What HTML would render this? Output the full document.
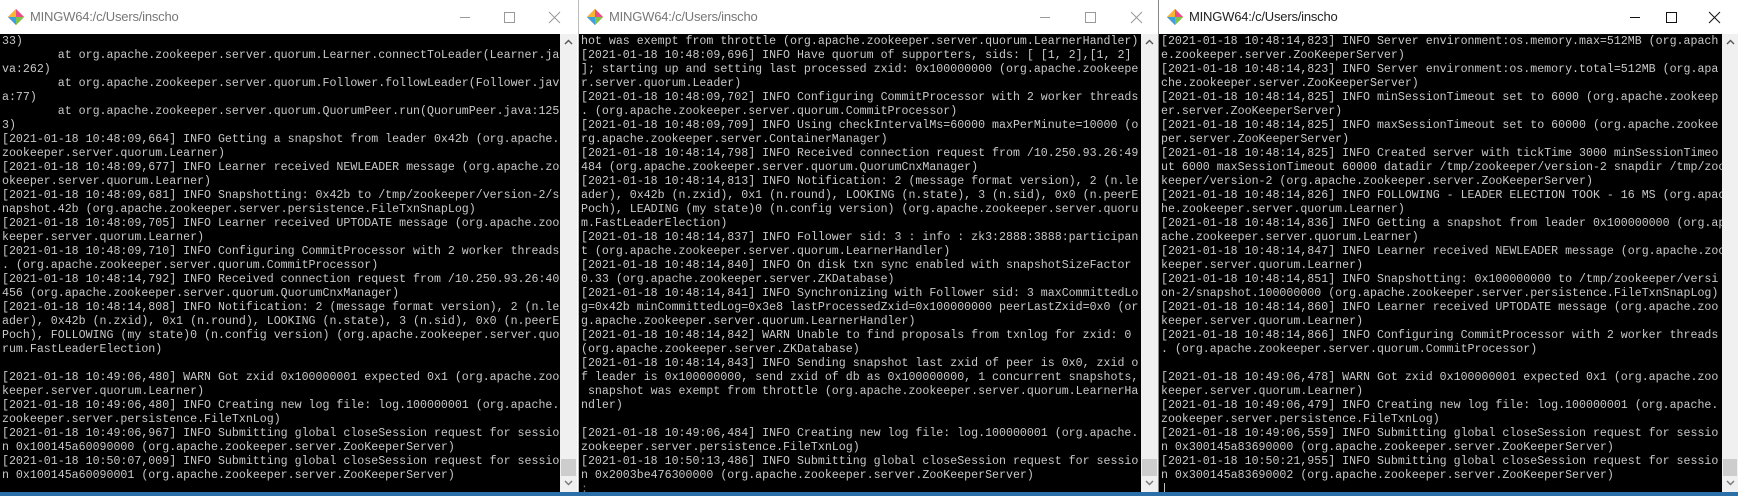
<!DOCTYPE html>
<html><head><meta charset="utf-8"><style>
*{margin:0;padding:0;box-sizing:border-box}
body{width:1738px;height:496px;overflow:hidden;background:#fff;position:relative;font-family:"Liberation Sans",sans-serif}
.win{position:absolute;top:0;height:492px;background:#fff;overflow:hidden}
.title{position:absolute;left:0;top:0;right:0;height:34px;background:#fff}
.title .t{position:absolute;left:30px;top:9px;font-size:13px;color:#222;letter-spacing:-0.2px}
.title.in .t{color:#777}
.icon{position:absolute;left:8px;top:9px}
.btn{position:absolute;top:0;height:34px;width:46px;color:#111}
.in .btn{color:#999}
.term{position:absolute;left:0;top:34px;bottom:0;background:#000;overflow:hidden}
pre{font-family:"Liberation Mono",monospace;font-size:11.62px;line-height:14px;color:#c8c8c8;white-space:pre;padding-left:2px;padding-top:1px}
.sb{position:absolute;top:34px;bottom:0;width:17px;background:#f0f0f0}
.thumb{position:absolute;left:1px;right:1px;top:425px;height:17px;background:#cdcdcd}
.ua,.da{position:absolute;left:4px;width:9px;height:6px}
.ua{top:5px}.da{bottom:6px}
.blue{position:absolute;left:0;right:0;bottom:0;height:4px;background:#2b6fa8}
</style></head><body>

<svg width="0" height="0" style="position:absolute">
<defs><g id="gi"><path d="M8 0 L16 8 L8 16 L0 8 Z" fill="#f1502f"/><path d="M8 0 L16 8 L8 8 Z" fill="#e94e8a"/><path d="M0 8 L8 8 L8 16 Z" fill="#3ba0e0"/><path d="M8 8 L16 8 L8 16 Z" fill="#7cc44a"/><path d="M0 8 L8 0 L8 8 Z" fill="#f7b733"/></g></defs></svg>

<!-- Window 1 -->
<div class="win" style="left:0;width:577px">
 <div class="title in"><svg class="icon" width="16" height="16"><use href="#gi"/></svg><span class="t">MINGW64:/c/Users/inscho</span>
  <svg class="btn" style="left:442px" viewBox="0 0 46 34"><path d="M18 17.5h10" stroke="currentColor"/></svg>
  <svg class="btn" style="left:486px" viewBox="0 0 46 34"><rect x="18.5" y="12.5" width="10" height="10" fill="none" stroke="currentColor"/></svg>
  <svg class="btn" style="left:531px" viewBox="0 0 46 34"><path d="M18 12l11 11M29 12l-11 11" stroke="currentColor"/></svg>
 </div>
 <div class="term" style="right:17px"><pre>33)
        at org.apache.zookeeper.server.quorum.Learner.connectToLeader(Learner.ja
va:262)
        at org.apache.zookeeper.server.quorum.Follower.followLeader(Follower.jav
a:77)
        at org.apache.zookeeper.server.quorum.QuorumPeer.run(QuorumPeer.java:125
3)
[2021-01-18 10:48:09,664] INFO Getting a snapshot from leader 0x42b (org.apache.
zookeeper.server.quorum.Learner)
[2021-01-18 10:48:09,677] INFO Learner received NEWLEADER message (org.apache.zo
okeeper.server.quorum.Learner)
[2021-01-18 10:48:09,681] INFO Snapshotting: 0x42b to /tmp/zookeeper/version-2/s
napshot.42b (org.apache.zookeeper.server.persistence.FileTxnSnapLog)
[2021-01-18 10:48:09,705] INFO Learner received UPTODATE message (org.apache.zoo
keeper.server.quorum.Learner)
[2021-01-18 10:48:09,710] INFO Configuring CommitProcessor with 2 worker threads
. (org.apache.zookeeper.server.quorum.CommitProcessor)
[2021-01-18 10:48:14,792] INFO Received connection request from /10.250.93.26:40
456 (org.apache.zookeeper.server.quorum.QuorumCnxManager)
[2021-01-18 10:48:14,808] INFO Notification: 2 (message format version), 2 (n.le
ader), 0x42b (n.zxid), 0x1 (n.round), LOOKING (n.state), 3 (n.sid), 0x0 (n.peerE
Poch), FOLLOWING (my state)0 (n.config version) (org.apache.zookeeper.server.quo
rum.FastLeaderElection)

[2021-01-18 10:49:06,480] WARN Got zxid 0x100000001 expected 0x1 (org.apache.zoo
keeper.server.quorum.Learner)
[2021-01-18 10:49:06,480] INFO Creating new log file: log.100000001 (org.apache.
zookeeper.server.persistence.FileTxnLog)
[2021-01-18 10:49:06,967] INFO Submitting global closeSession request for sessio
n 0x100145a60090000 (org.apache.zookeeper.server.ZooKeeperServer)
[2021-01-18 10:50:07,009] INFO Submitting global closeSession request for sessio
n 0x100145a60090001 (org.apache.zookeeper.server.ZooKeeperServer)</pre></div>
 <div class="sb" style="right:0"><svg class="ua" viewBox="0 0 9 6"><path d="M1 5l3.5-3.5L8 5" stroke="#555" fill="none" stroke-width="1.4"/></svg><div class="thumb"></div><svg class="da" viewBox="0 0 9 6"><path d="M1 1l3.5 3.5L8 1" stroke="#777" fill="none" stroke-width="1.4"/></svg></div>
</div>

<!-- Window 2 -->
<div class="win" style="left:578px;width:580px;border-left:1px solid #bbb">
 <div class="title in"><svg class="icon" width="16" height="16"><use href="#gi"/></svg><span class="t">MINGW64:/c/Users/inscho</span>
  <svg class="btn" style="left:443px" viewBox="0 0 46 34"><path d="M18 17.5h10" stroke="currentColor"/></svg>
  <svg class="btn" style="left:488px" viewBox="0 0 46 34"><rect x="18.5" y="12.5" width="10" height="10" fill="none" stroke="currentColor"/></svg>
  <svg class="btn" style="left:534px" viewBox="0 0 46 34"><path d="M18 12l11 11M29 12l-11 11" stroke="currentColor"/></svg>
 </div>
 <div class="term" style="right:17px"><pre>hot was exempt from throttle (org.apache.zookeeper.server.quorum.LearnerHandler)
[2021-01-18 10:48:09,696] INFO Have quorum of supporters, sids: [ [1, 2],[1, 2]
]; starting up and setting last processed zxid: 0x100000000 (org.apache.zookeepe
r.server.quorum.Leader)
[2021-01-18 10:48:09,702] INFO Configuring CommitProcessor with 2 worker threads
. (org.apache.zookeeper.server.quorum.CommitProcessor)
[2021-01-18 10:48:09,709] INFO Using checkIntervalMs=60000 maxPerMinute=10000 (o
rg.apache.zookeeper.server.ContainerManager)
[2021-01-18 10:48:14,798] INFO Received connection request from /10.250.93.26:49
484 (org.apache.zookeeper.server.quorum.QuorumCnxManager)
[2021-01-18 10:48:14,813] INFO Notification: 2 (message format version), 2 (n.le
ader), 0x42b (n.zxid), 0x1 (n.round), LOOKING (n.state), 3 (n.sid), 0x0 (n.peerE
Poch), LEADING (my state)0 (n.config version) (org.apache.zookeeper.server.quoru
m.FastLeaderElection)
[2021-01-18 10:48:14,837] INFO Follower sid: 3 : info : zk3:2888:3888:participan
t (org.apache.zookeeper.server.quorum.LearnerHandler)
[2021-01-18 10:48:14,840] INFO On disk txn sync enabled with snapshotSizeFactor
0.33 (org.apache.zookeeper.server.ZKDatabase)
[2021-01-18 10:48:14,841] INFO Synchronizing with Follower sid: 3 maxCommittedLo
g=0x42b minCommittedLog=0x3e8 lastProcessedZxid=0x100000000 peerLastZxid=0x0 (or
g.apache.zookeeper.server.quorum.LearnerHandler)
[2021-01-18 10:48:14,842] WARN Unable to find proposals from txnlog for zxid: 0
(org.apache.zookeeper.server.ZKDatabase)
[2021-01-18 10:48:14,843] INFO Sending snapshot last zxid of peer is 0x0, zxid o
f leader is 0x100000000, send zxid of db as 0x100000000, 1 concurrent snapshots,
 snapshot was exempt from throttle (org.apache.zookeeper.server.quorum.LearnerHa
ndler)

[2021-01-18 10:49:06,484] INFO Creating new log file: log.100000001 (org.apache.
zookeeper.server.persistence.FileTxnLog)
[2021-01-18 10:50:13,486] INFO Submitting global closeSession request for sessio
n 0x2003be476300000 (org.apache.zookeeper.server.ZooKeeperServer)
<span style="color:#777">:</span></pre></div>
 <div class="sb" style="right:0"><svg class="ua" viewBox="0 0 9 6"><path d="M1 5l3.5-3.5L8 5" stroke="#555" fill="none" stroke-width="1.4"/></svg><div class="thumb"></div><svg class="da" viewBox="0 0 9 6"><path d="M1 1l3.5 3.5L8 1" stroke="#777" fill="none" stroke-width="1.4"/></svg></div>
</div>

<!-- Window 3 -->
<div class="win" style="left:1158px;width:580px;border-left:1px solid #888">
 <div class="title"><svg class="icon" width="16" height="16"><use href="#gi"/></svg><span class="t">MINGW64:/c/Users/inscho</span>
  <svg class="btn" style="left:453px" viewBox="0 0 46 34"><path d="M18 17.5h10" stroke="currentColor"/></svg>
  <svg class="btn" style="left:489px" viewBox="0 0 46 34"><rect x="18.5" y="12.5" width="10" height="10" fill="none" stroke="currentColor"/></svg>
  <svg class="btn" style="left:532px" viewBox="0 0 46 34"><path d="M18 12l11 11M29 12l-11 11" stroke="currentColor"/></svg>
 </div>
 <div class="term" style="right:16px"><pre>[2021-01-18 10:48:14,823] INFO Server environment:os.memory.max=512MB (org.apach
e.zookeeper.server.ZooKeeperServer)
[2021-01-18 10:48:14,823] INFO Server environment:os.memory.total=512MB (org.apa
che.zookeeper.server.ZooKeeperServer)
[2021-01-18 10:48:14,825] INFO minSessionTimeout set to 6000 (org.apache.zookeep
er.server.ZooKeeperServer)
[2021-01-18 10:48:14,825] INFO maxSessionTimeout set to 60000 (org.apache.zookee
per.server.ZooKeeperServer)
[2021-01-18 10:48:14,825] INFO Created server with tickTime 3000 minSessionTimeo
ut 6000 maxSessionTimeout 60000 datadir /tmp/zookeeper/version-2 snapdir /tmp/zoo
keeper/version-2 (org.apache.zookeeper.server.ZooKeeperServer)
[2021-01-18 10:48:14,826] INFO FOLLOWING - LEADER ELECTION TOOK - 16 MS (org.apac
he.zookeeper.server.quorum.Learner)
[2021-01-18 10:48:14,836] INFO Getting a snapshot from leader 0x100000000 (org.ap
ache.zookeeper.server.quorum.Learner)
[2021-01-18 10:48:14,847] INFO Learner received NEWLEADER message (org.apache.zoo
keeper.server.quorum.Learner)
[2021-01-18 10:48:14,851] INFO Snapshotting: 0x100000000 to /tmp/zookeeper/versi
on-2/snapshot.100000000 (org.apache.zookeeper.server.persistence.FileTxnSnapLog)
[2021-01-18 10:48:14,860] INFO Learner received UPTODATE message (org.apache.zoo
keeper.server.quorum.Learner)
[2021-01-18 10:48:14,866] INFO Configuring CommitProcessor with 2 worker threads
. (org.apache.zookeeper.server.quorum.CommitProcessor)

[2021-01-18 10:49:06,478] WARN Got zxid 0x100000001 expected 0x1 (org.apache.zoo
keeper.server.quorum.Learner)
[2021-01-18 10:49:06,479] INFO Creating new log file: log.100000001 (org.apache.
zookeeper.server.persistence.FileTxnLog)
[2021-01-18 10:49:06,559] INFO Submitting global closeSession request for sessio
n 0x300145a83690000 (org.apache.zookeeper.server.ZooKeeperServer)
[2021-01-18 10:50:21,955] INFO Submitting global closeSession request for sessio
n 0x300145a83690002 (org.apache.zookeeper.server.ZooKeeperServer)
<span style="color:#ccc">|</span></pre></div>
 <div class="sb" style="right:0;width:16px"><svg class="ua" viewBox="0 0 9 6"><path d="M1 5l3.5-3.5L8 5" stroke="#555" fill="none" stroke-width="1.4"/></svg><div class="thumb"></div><svg class="da" viewBox="0 0 9 6"><path d="M1 1l3.5 3.5L8 1" stroke="#777" fill="none" stroke-width="1.4"/></svg></div>
</div>

<div class="blue"></div>
</body></html>
